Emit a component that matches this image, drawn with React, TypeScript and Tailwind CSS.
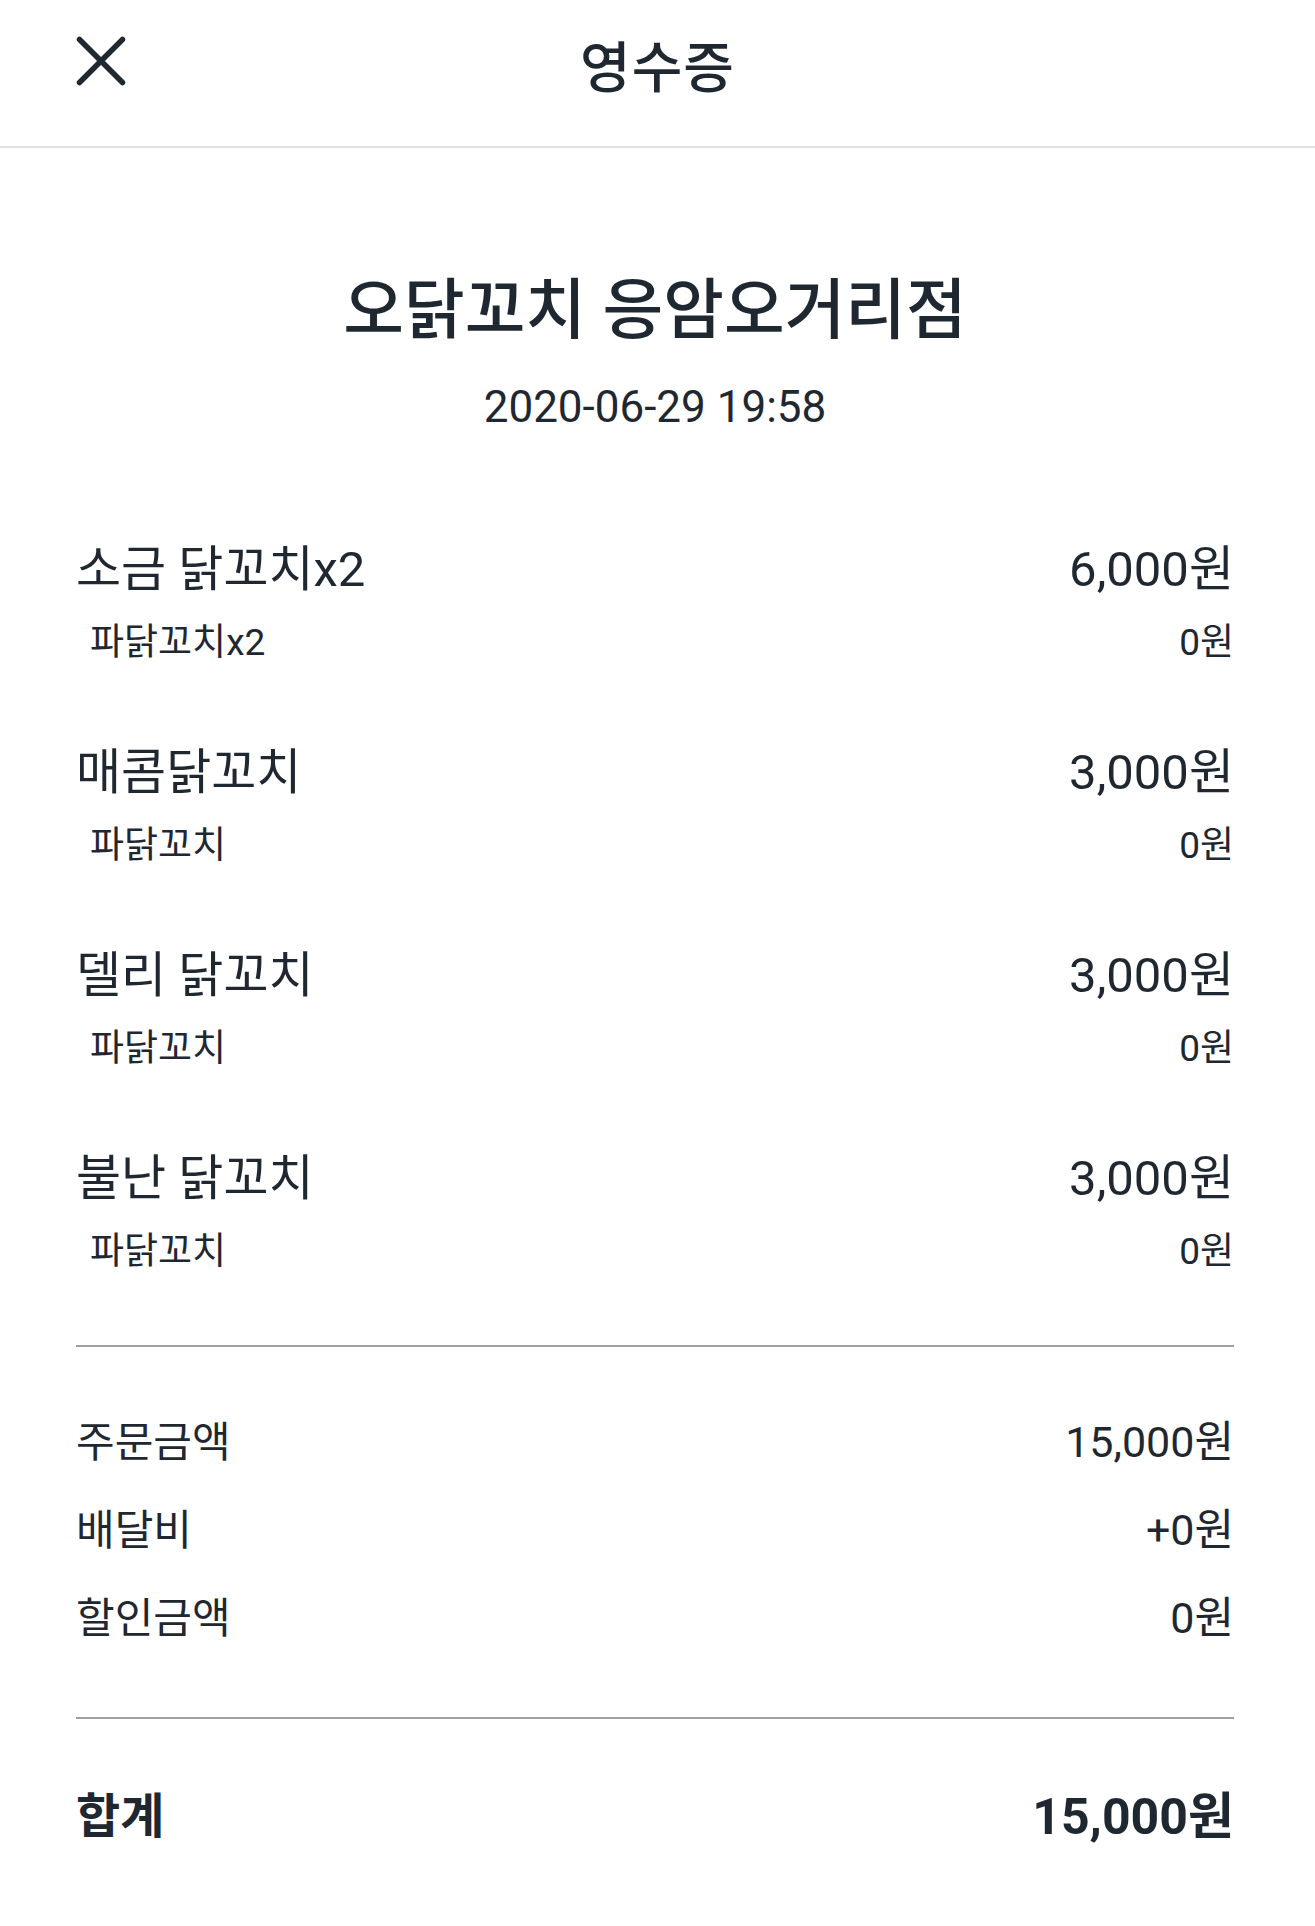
import React from "react";

type Item = {
  name: string;
  price: string;
  option: string;
  optionPrice: string;
};

const items: Item[] = [
  { name: "소금 닭꼬치x2", price: "6,000원", option: "파닭꼬치x2", optionPrice: "0원" },
  { name: "매콤닭꼬치", price: "3,000원", option: "파닭꼬치", optionPrice: "0원" },
  { name: "델리 닭꼬치", price: "3,000원", option: "파닭꼬치", optionPrice: "0원" },
  { name: "불난 닭꼬치", price: "3,000원", option: "파닭꼬치", optionPrice: "0원" },
];

const summary = [
  { label: "주문금액", value: "15,000원" },
  { label: "배달비", value: "+0원" },
  { label: "할인금액", value: "0원" },
];

function CloseIcon() {
  return (
    <svg width="52" height="52" viewBox="0 0 52 52" fill="none">
      <path
        d="M4.5 4.5L47.5 47.5M47.5 4.5L4.5 47.5"
        stroke="#1f2831"
        strokeWidth="5.5"
        strokeLinecap="round"
      />
    </svg>
  );
}

export default function App() {
  return (
    <div className="min-h-[1926px] w-full bg-white text-[#1f2831] font-['Roboto','Noto_Sans_CJK_KR',sans-serif]">
      {/* Cabecera */}
      <header className="grid h-[148px] grid-cols-[1fr_auto_1fr] items-center border-b-2 border-[#e2e2e2]">
        <div className="flex items-center pl-[75px] pb-[24px]">
          <button title="닫기">
            <CloseIcon />
          </button>
        </div>
        <h1 className="text-[55px] font-medium leading-none tracking-[1px] pb-[10px]">영수증</h1>
        <div />
      </header>

      <main className="pl-[76px] pr-[81px]">
        {/* Tienda */}
        <div className="mt-[125px] flex flex-col items-center">
          <h2 className="text-[66px] font-medium leading-[76px]">오닭꼬치 응암오거리점</h2>
          <p className="mt-[32px] text-[44px] leading-[52px]">2020-06-29 19:58</p>
        </div>

        {/* Productos */}
        <div className="mt-[107px] flex flex-col gap-[75px]">
          {items.map((item) => (
            <div key={item.name}>
              <div className="flex h-[60px] items-center justify-between text-[49px]">
                <span>{item.name}</span>
                <span>{item.price}</span>
              </div>
              <div className="mt-[18px] flex h-[50px] items-center justify-between text-[37px]">
                <span className="pl-[14px]">{item.option}</span>
                <span>{item.optionPrice}</span>
              </div>
            </div>
          ))}
        </div>

        <div className="mt-[68px] h-[2px] bg-[#9da1a5]" />

        {/* Resumen */}
        <div className="mt-[51px] flex flex-col">
          {summary.map((row) => (
            <div key={row.label} className="flex h-[88px] items-center justify-between text-[42px]">
              <span>{row.label}</span>
              <span className="text-[43px]">{row.value}</span>
            </div>
          ))}
        </div>

        <div className="mt-[55px] h-[2px] bg-[#9da1a5]" />

        {/* Total */}
        <div className="mt-[68px] flex h-[60px] items-center justify-between font-bold">
          <span className="text-[48px]">합계</span>
          <span className="text-[50px]">15,000원</span>
        </div>
      </main>
    </div>
  );
}
